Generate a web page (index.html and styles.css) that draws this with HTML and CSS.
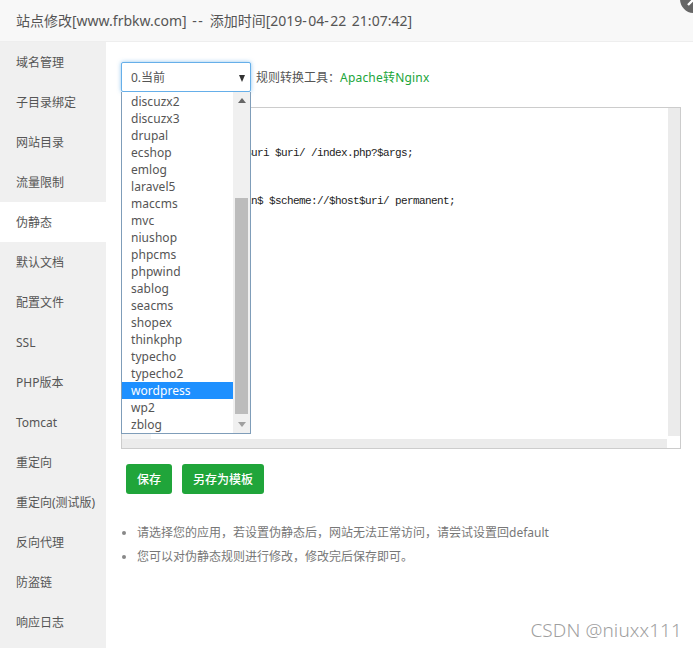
FILE: index.html
```html
<!DOCTYPE html>
<html lang="zh">
<head>
<meta charset="utf-8">
<title>站点修改</title>
<link rel="stylesheet" href="styles.css">
</head>
<body>
<div class="dialog">
  <header class="title">站点修改[www.frbkw.com] <span class="dash">--</span> 添加时间[2019<span class="dash">-</span>04<span class="dash">-</span>22 21:07:42]</header>
  <button class="close" aria-label="关闭"><svg width="26" height="26" viewBox="0 0 26 26"><path d="M7 19 L19 7 M7 7 L19 19" stroke="#fff" stroke-width="2.4"/></svg></button>
  <div class="layout">
    <nav class="side">
      <a>域名管理</a><a>子目录绑定</a><a>网站目录</a><a>流量限制</a><a class="on">伪静态</a><a>默认文档</a><a>配置文件</a><a>SSL</a><a>PHP版本</a><a>Tomcat</a><a>重定向</a><a>重定向(测试版)</a><a>反向代理</a><a>防盗链</a><a>响应日志</a>
    </nav>
    <main class="main">
      <div class="toolbar">
        <div class="select"><span>0.当前</span><i class="caret"></i></div>
        <span class="tool-label">规则转换工具：</span><a class="tool-link">Apache转Nginx</a>
      </div>
      <div class="list">
        <ul class="options">
          <li>discuzx2</li><li>discuzx3</li><li>drupal</li><li>ecshop</li><li>emlog</li><li>laravel5</li><li>maccms</li><li>mvc</li><li>niushop</li><li>phpcms</li><li>phpwind</li><li>sablog</li><li>seacms</li><li>shopex</li><li>thinkphp</li><li>typecho</li><li>typecho2</li><li class="sel">wordpress</li><li>wp2</li><li>zblog</li>
        </ul>
        <div class="lbar">
          <i class="up"></i>
          <div class="ltrack"><div class="lthumb"></div></div>
          <i class="down"></i>
        </div>
      </div>
      <div class="editor">
        <pre class="code">location /
{
     try_files $uri $uri/ /index.php?$args;
}

rewrite /wp-admin$ $scheme://$host$uri/ permanent;</pre>
        <div class="gutter"></div>
        <div class="vbar"></div>
        <div class="hbar"></div>
      </div>
      <div class="actions"><button class="btn save">保存</button><button class="btn">另存为模板</button></div>
      <ul class="hints">
        <li>请选择您的应用，若设置伪静态后，网站无法正常访问，请尝试设置回default</li>
        <li>您可以对伪静态规则进行修改，修改完后保存即可。</li>
      </ul>
    </main>
  </div>
  <div class="mark">CSDN @niuxx111</div>
</div>
</body>
</html>
```
FILE: styles.css
```css
* { box-sizing: border-box; }
html, body { margin: 0; height: 100%; }
body { overflow: hidden; background: #fff; font-family: "Noto Sans", "Noto Sans CJK SC", sans-serif; color: #555; font-size: 12px; }
.dialog { position: relative; width: 693px; height: 648px; overflow: hidden; display: flex; flex-direction: column; }
.title { height: 42px; flex: none; padding-left: 16px; line-height: 41px; font-size: 14px; word-spacing: 2px; background: #f8f8f8; border-bottom: 1px solid #eee; color: #555; white-space: nowrap; }
.dash { letter-spacing: 1.4px; }
.close { position: absolute; right: -15px; top: -15px; width: 28px; height: 28px; padding: 1px; border: 0; border-radius: 50%; background: #666; }
.close svg { display: block; }
.layout { flex: 1; display: flex; min-height: 0; }
.side { width: 106px; flex: none; background: #f0f0f0; display: flex; flex-direction: column; }
.side a { height: 40px; line-height: 42px; padding-left: 16px; white-space: nowrap; color: #555; }
.side a.on { background: #fff; }
.main { position: relative; flex: 1; padding: 20px 12px 0 15px; min-width: 0; }
.toolbar { display: flex; align-items: center; height: 30px; }
.select { position: relative; width: 130px; height: 30px; line-height: 29px; padding-left: 9px; border: 1px solid #66afe9; border-radius: 2px; box-shadow: 0 0 4px rgba(102, 175, 233, .7); margin-right: 5px; color: #555; background: #fff; }
.caret { position: absolute; right: 5px; top: 12px; border-style: solid; border-width: 7px 3.5px 0; border-color: #333 transparent transparent; }
.tool-label { color: #555; }
.tool-link { color: #20a53a; letter-spacing: .2px; }
.list { position: absolute; z-index: 2; left: 15px; top: 50px; width: 130px; height: 342px; display: flex; background: #fff; border: 1px solid #7f9db9; border-top: 0; }
.options { list-style: none; margin: 0; padding: 1px 0 0; flex: 1; font-size: 12px; letter-spacing: .05px; }
.options li { height: 17px; line-height: 17px; padding-left: 9px; color: #555; }
.options li.sel { background: #1e90ff; color: #fff; }
.lbar { width: 17px; flex: none; background: #f0f0f0; display: flex; flex-direction: column; align-items: center; }
.up, .down { flex: none; width: 0; height: 0; border-style: solid; border-color: transparent; margin: 6px 0; }
.up { border-width: 0 4px 5px; border-bottom-color: #666; }
.down { border-width: 5px 4px 0; border-top-color: #a0a0a0; }
.ltrack { flex: 1; width: 13px; padding-top: 89px; padding-bottom: 2px; }
.lthumb { height: 100%; background: #bcbcbc; }
.editor { position: relative; margin-top: 15px; width: 560px; height: 342px; border: 1px solid #ccc; overflow: hidden; background: #fff; }
.code { margin: 0; padding: 5px 0 0 33px; font-family: "Liberation Mono", monospace; font-size: 11px; letter-spacing: -.6px; line-height: 16px; color: #222; }
.gutter { position: absolute; left: 0; bottom: 0; width: 29px; height: 14px; background: #f5f5f5; }
.vbar { position: absolute; right: 0; top: 0; bottom: 12px; width: 12px; background: #ebebeb; }
.hbar { position: absolute; left: 0; right: 13px; bottom: 0; height: 9px; background: #ebebeb; }
.actions { display: flex; gap: 10px; margin: 15px 0 0 5px; }
.btn { height: 30px; padding: 0 11px; border: 0; border-radius: 3px; background: #20a53a; color: #fff; font: 500 12px "Noto Sans", "Noto Sans CJK SC", sans-serif; }
.hints { margin: 27px 0 0; padding: 0 0 0 16px; color: #777; }
.hints li { height: 24px; line-height: 24px; white-space: nowrap; }
.hints li::marker { color: #888; }
.mark { position: absolute; right: 11px; bottom: 4px; font-family: "Noto Sans", sans-serif; font-size: 19px; letter-spacing: .1px; font-weight: 300; line-height: 28px; color: #9f9f9f; }
```
